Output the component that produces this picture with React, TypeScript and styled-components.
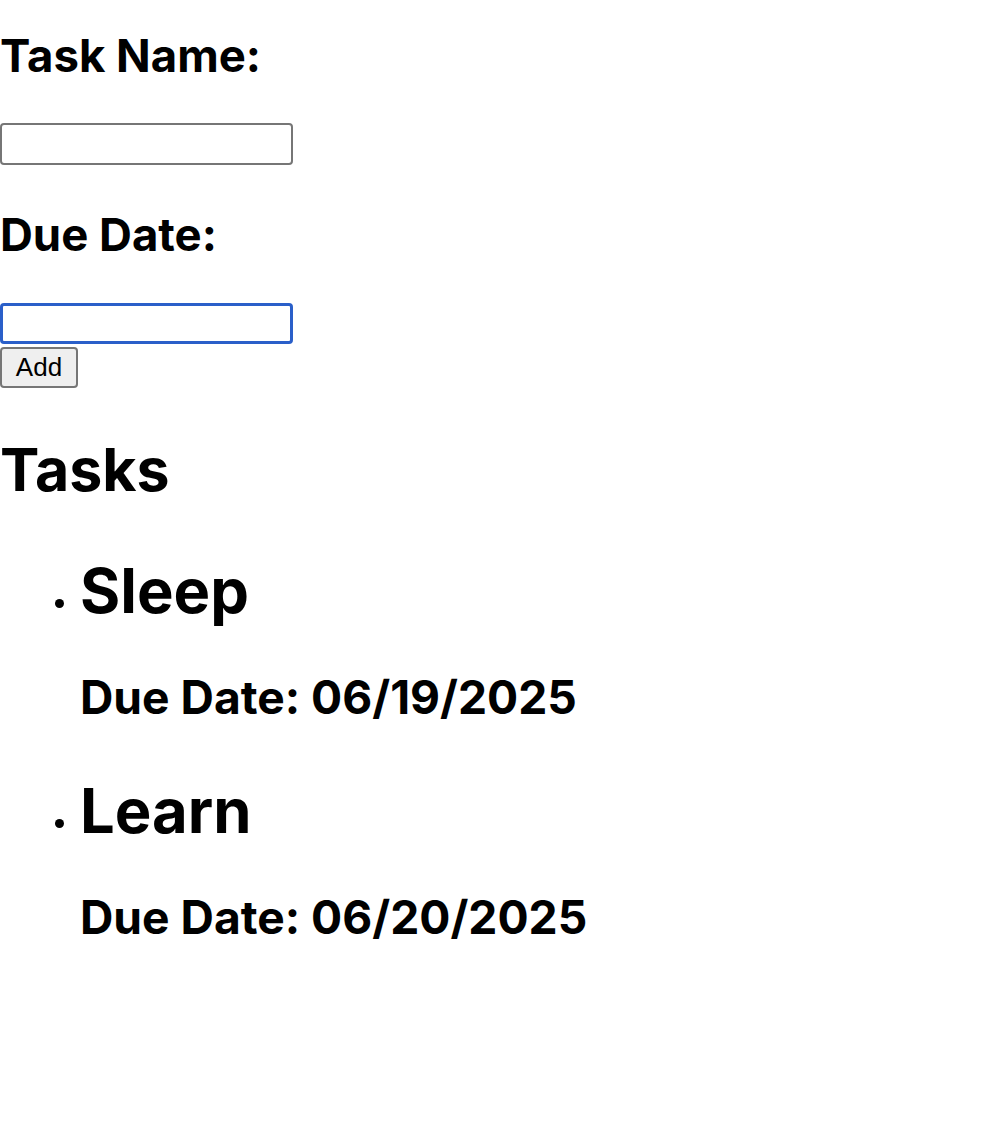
import React from "react";
import styled, { createGlobalStyle } from "styled-components";

const Global = createGlobalStyle`
  html, body { margin: 0; padding: 0; background: #fff; }
  body { font-family: Inter, "Noto Sans", sans-serif; color: #000; }
`;

const Page = styled.div`
  display: flex;
  flex-direction: column;
  align-items: flex-start;
`;

const Label = styled.h2<{ $top: number }>`
  margin: ${(p) => p.$top}px 0 0;
  font-size: 45.5px;
  line-height: 55px;
  font-weight: 700;
`;

const Field = styled.input<{ $focused?: boolean; $top: number }>`
  box-sizing: border-box;
  display: block;
  margin: ${(p) => p.$top}px 0 0;
  width: 293px;
  height: ${(p) => (p.$focused ? 41 : 42)}px;
  border: ${(p) => (p.$focused ? "3px solid #2a5fc9" : "2px solid #767676")};
  border-radius: 4px;
  background: #fff;
  outline: none;
  padding: 0 6px;
  font-size: 26px;
`;

const AddButton = styled.button`
  box-sizing: border-box;
  margin: 3px 0 0;
  width: 78px;
  height: 41px;
  background: #efefef;
  border: 2px solid #767676;
  border-radius: 4px;
  font-family: "Liberation Sans", Arial, sans-serif;
  font-size: 26px;
  color: #000;
  padding: 0;
`;

const Title = styled.h1`
  margin: 47px 0 0;
  font-size: 59px;
  line-height: 1.2;
  font-weight: 700;
`;

const List = styled.ul`
  margin: 0;
  padding: 0 0 0 80px;
  list-style: disc;
`;

const Item = styled.li`
  font-size: 28px;
`;

const ItemName = styled.h2`
  margin: 48px 0 0;
  font-size: 61.5px;
  line-height: 1.2;
  font-weight: 700;
`;

const ItemDue = styled.h3`
  margin: 42.5px 0 0;
  font-size: 46.2px;
  line-height: 1.2;
  font-weight: 700;
`;

const tasks = [
  { name: "Sleep", due: "06/19/2025" },
  { name: "Learn", due: "06/20/2025" },
];

export default function App() {
  return (
    <Page>
      <Global />
      <Label $top={28}>Task Name:</Label>
      <Field type="text" $top={40} />
      <Label $top={42}>Due Date:</Label>
      <Field type="text" $top={41} $focused />
      <AddButton>Add</AddButton>
      <Title>Tasks</Title>
      <List>
        {tasks.map((t) => (
          <Item key={t.name}>
            <ItemName>{t.name}</ItemName>
            <ItemDue>Due Date: {t.due}</ItemDue>
          </Item>
        ))}
      </List>
    </Page>
  );
}
